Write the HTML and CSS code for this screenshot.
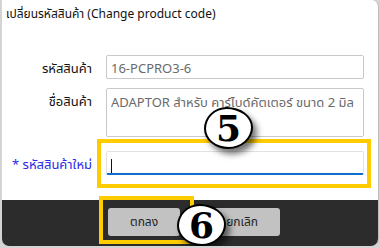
FILE: index.html
```html
<!DOCTYPE html>
<html lang="th">
<head>
    <meta charset="UTF-8">
    <title>เปลี่ยนรหัสสินค้า</title>
    <link rel="stylesheet" href="styles.css">
</head>
<body>
    <div class="dialog">
        <div class="title">เปลี่ยนรหัสสินค้า (Change product code)</div>

        <div class="form">
            <div class="row">
                <label class="label">รหัสสินค้า</label>
                <div class="field readonly">16-PCPRO3-6</div>
            </div>
            <div class="row">
                <label class="label">ชื่อสินค้า</label>
                <div class="field area">ADAPTOR สำหรับ คาร์ไบด์คัตเตอร์ ขนาด 2 มิล</div>
            </div>
            <div class="row row-new">
                <label class="label required">* รหัสสินค้าใหม่</label>
                <div class="field active"><span class="caret"></span></div>
            </div>
        </div>

        <div class="footer">
            <button class="btn">ตกลง</button>
            <button class="btn">ยกเลิก</button>
        </div>

        <!-- annotations -->
        <div class="mark mark-input"></div>
        <div class="mark mark-ok"></div>
        <div class="step step-5">5</div>
        <div class="step step-6">6</div>
    </div>
</body>
</html>
```

FILE: styles.css
```css
body {
    margin: 0;
    background-color: #d4d4d4;
    font-family: Tahoma, 'Noto Sans', 'Noto Sans Thai', sans-serif;
    font-size: 13px;
    color: #222;
}

.dialog {
    position: relative;
    width: 376px;
    height: 246px;
    margin-left: 2px;
    background-color: #fff;
    border-right: 1px solid #bdbdbd;
    border-radius: 0 7px 7px 7px;
    display: flex;
    flex-direction: column;
}

.title {
    height: 27px;
    padding: 5px 4px 0;
    font-size: 12px;
    color: #111;
    box-sizing: border-box;
}

.form {
    display: flex;
    flex-direction: column;
    gap: 9px;
    padding: 28px 14px 0 0;
}

.row {
    display: flex;
    align-items: flex-start;
    gap: 14px;
}

.row-new {
    margin-top: 5px;
}

.label {
    width: 90px;
    text-align: right;
    padding-top: 4px;
    color: #111;
}

.label.required {
    color: #2a2ae6;
}

.field {
    flex: 1;
    height: 24px;
    box-sizing: border-box;
    border: 1px solid #c9c9c9;
    border-radius: 2px;
    padding: 3px 4px;
    color: #6a6a6a;
    white-space: nowrap;
    overflow: hidden;
}

.field.area {
    height: 49px;
    padding-top: 4px;
}

.field.active {
    border-color: #e2e2e2;
    border-bottom: 2px solid #0b6fcb;
    color: #111;
}

.caret {
    display: inline-block;
    width: 1px;
    height: 14px;
    background-color: #111;
    vertical-align: middle;
}

.footer {
    margin-top: auto;
    height: 46px;
    background-color: #2c2c2c;
    border-radius: 0 0 7px 7px;
    display: flex;
    align-items: flex-start;
    gap: 24px;
    padding: 8px 0 0 106px;
    box-sizing: border-box;
}

.btn {
    height: 28px;
    padding: 0 22px;
    border: none;
    border-radius: 3px;
    background-color: #c2c2c2;
    font-family: inherit;
    font-size: 12px;
    color: #222;
}

.mark {
    position: absolute;
    border: 4px solid #ffcc00;
    box-sizing: border-box;
}

.mark-input {
    left: 95px;
    top: 139px;
    width: 274px;
    height: 49px;
}

.mark-ok {
    left: 97px;
    top: 196px;
    width: 95px;
    height: 48px;
}

.step {
    position: absolute;
    width: 45px;
    height: 38px;
    border: 2.5px solid #000;
    border-radius: 46% 54% 50% 50% / 52% 48% 52% 48%;
    background-color: #fff;
    box-shadow: 4px 5px 6px rgba(0, 0, 0, 0.55);
    font-family: 'DejaVu Serif', 'Liberation Serif', serif;
    font-weight: bold;
    font-size: 36px;
    line-height: 38px;
    text-align: center;
    color: #000;
}

.step-5 {
    left: 202px;
    top: 107px;
}

.step-6 {
    left: 175px;
    top: 204px;
}
```
